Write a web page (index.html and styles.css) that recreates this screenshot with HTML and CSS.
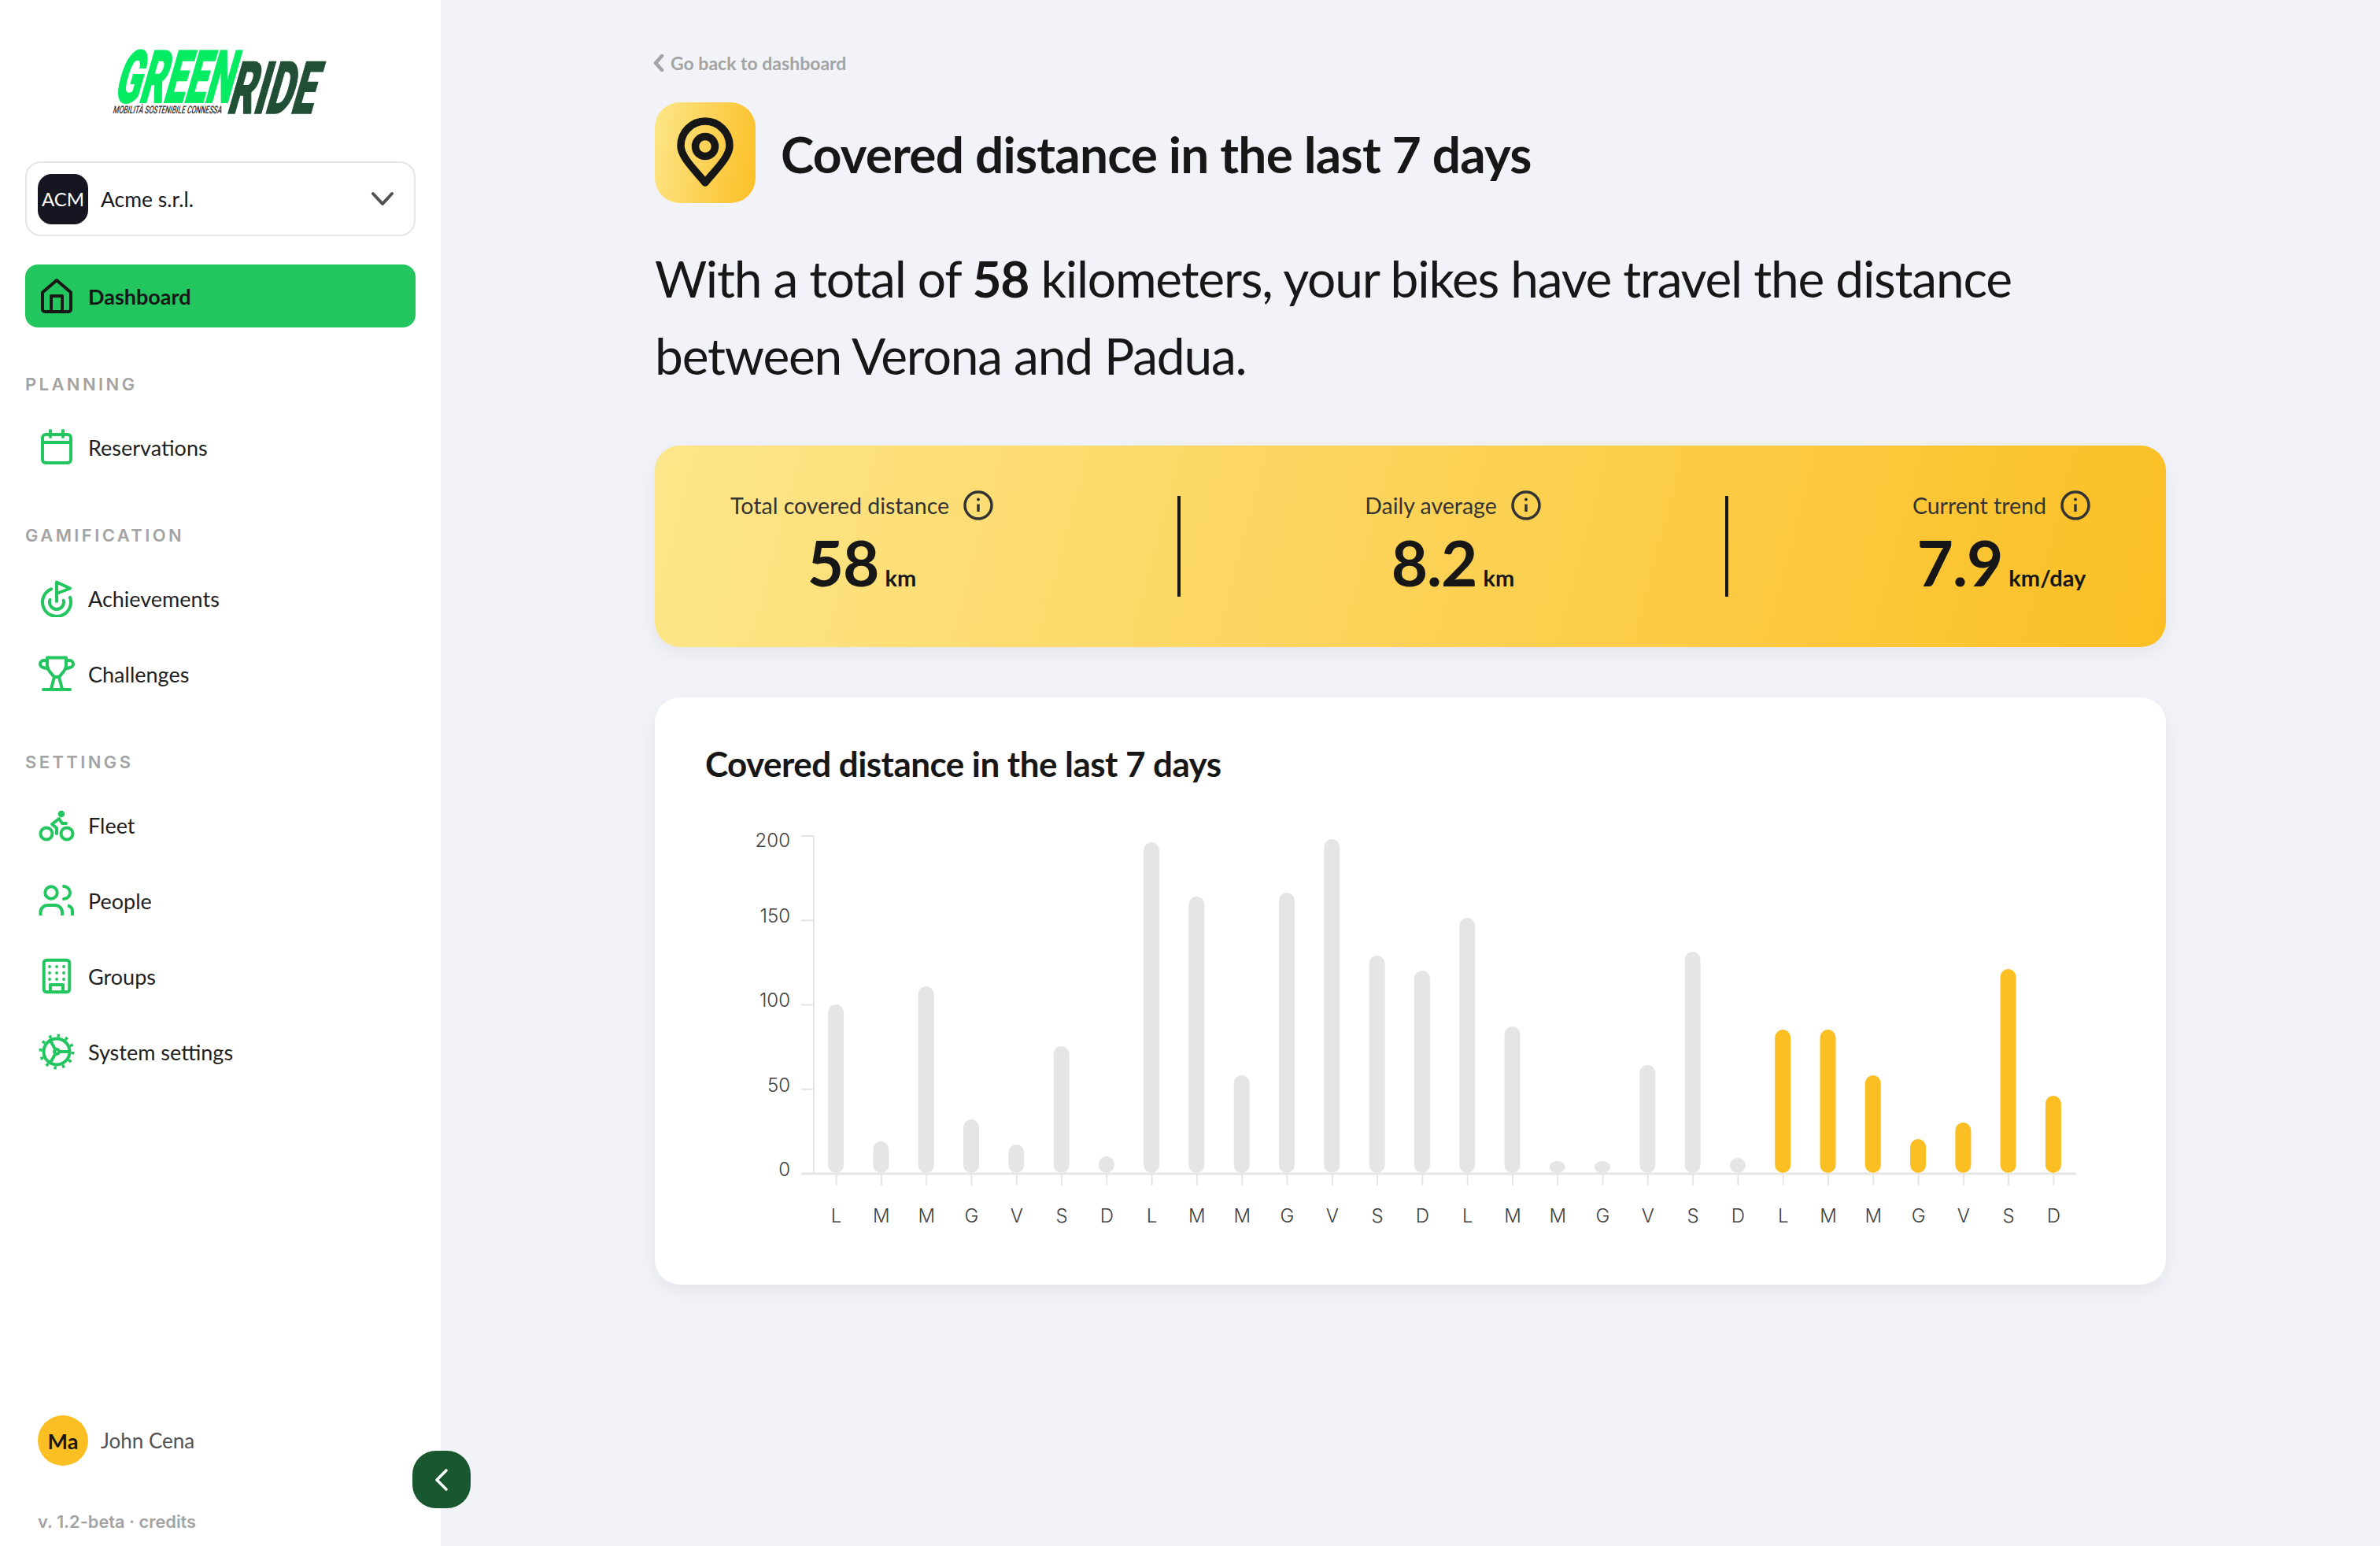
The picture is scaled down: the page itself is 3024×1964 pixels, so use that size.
FILE: index.html
```html
<!DOCTYPE html>
<html>
<head>
    <meta charset="utf-8">
    <title>GreenRide - Covered distance</title>
    <link rel="stylesheet" href="styles.css">
</head>
<body>
<div class="layout">
    <!--sidebar-->
    <aside class="sidebar">
        <svg class="logo" width="280" height="90" viewBox="0 0 280 90">
            <text class="logo-word logo-green" transform="translate(3,70) skewX(-16)" textLength="149" lengthAdjust="spacingAndGlyphs">GREEN</text>
            <text class="logo-word logo-dark" transform="translate(147,84) skewX(-16)" textLength="109" lengthAdjust="spacingAndGlyphs">RIDE</text>
            <text class="logo-tag" transform="translate(3,84) skewX(-14)" textLength="138" lengthAdjust="spacingAndGlyphs">MOBILITÀ SOSTENIBILE CONNESSA</text>
        </svg>

        <div class="org-select">
            <span class="org-avatar">ACM</span>
            <span class="org-name">Acme s.r.l.</span>
            <svg class="org-arrow" width="32" height="20" viewBox="0 0 32 20"><path d="M4 3 L16 16 L28 3"/></svg>
        </div>

        <nav class="nav">
            <a class="nav-item active">
                <svg class="nav-icon" viewBox="0 0 48 48"><path d="M6 19.5 L24 4 L42 19.5 V41 a3 3 0 0 1-3 3 H9 a3 3 0 0 1-3-3 Z"/><path d="M17 44 V24 H31 V44"/></svg>
                <span>Dashboard</span>
            </a>

            <h4 class="nav-title">PLANNING</h4>
            <a class="nav-item">
                <svg class="nav-icon" viewBox="0 0 48 48"><rect x="6" y="8" width="36" height="36" rx="4"/><path d="M6 18 H42 M16 3 V11 M32 3 V11"/></svg>
                <span>Reservations</span>
            </a>

            <h4 class="nav-title">GAMIFICATION</h4>
            <a class="nav-item">
                <svg class="nav-icon" viewBox="0 0 48 48"><path d="M17 12.4 A18 18 0 1 0 41 23"/><path d="M15.5 26 A9 9 0 1 0 32.7 26.7"/><path d="M24 28 V3.5 L41 11.5 L24 18"/></svg>
                <span>Achievements</span>
            </a>
            <a class="nav-item">
                <svg class="nav-icon" viewBox="0 0 48 48"><path d="M12 3.5 H36 V13 C36 20 30 24 27 28 L31 43 M12 3.5 V13 C12 20 18 24 21 28 L17 43 M7 44 H41 M21 28 H27"/><path d="M12 7 H8 a4.5 4.5 0 0 0-1 9 L12.5 17.500 M36 7 H40 a4.500 4.500 0 0 1 1 9 L35.500 17.500"/></svg>
                <span>Challenges</span>
            </a>

            <h4 class="nav-title">SETTINGS</h4>
            <a class="nav-item">
                <svg class="nav-icon" viewBox="0 0 48 48"><circle cx="11" cy="35" r="7.500"/><circle cx="37" cy="35" r="7.500"/><path d="M24 35 V28 L18 23 L27 16 L31 22 H36"/><circle class="fill" cx="30" cy="10" r="4.300"/></svg>
                <span>Fleet</span>
            </a>
            <a class="nav-item">
                <svg class="nav-icon" viewBox="0 0 48 48"><circle cx="17" cy="14" r="7.700"/><path d="M33 6 a8 8 0 0 1 0 16"/><path class="butt" d="M3.500 43 V39 A9 9 0 0 1 12.500 30 H22 A9 9 0 0 1 31 39 V43"/><path class="butt" d="M38 30.500 A7 7 0 0 1 44 38 V43"/></svg>
                <span>People</span>
            </a>
            <a class="nav-item">
                <svg class="nav-icon" viewBox="0 0 48 48"><rect x="7.700" y="3.700" width="32.600" height="40.600" rx="3.500"/><path d="M16 44 V35 H32 V44"/><g class="fill"><circle cx="15" cy="12" r="1.900"/><circle cx="24" cy="12" r="1.900"/><circle cx="33" cy="12" r="1.900"/><circle cx="15" cy="20" r="1.900"/><circle cx="24" cy="20" r="1.900"/><circle cx="33" cy="20" r="1.900"/><circle cx="15" cy="28" r="1.900"/><circle cx="24" cy="28" r="1.900"/><circle cx="33" cy="28" r="1.900"/></g></svg>
                <span>Groups</span>
            </a>
            <a class="nav-item">
                <svg class="nav-icon" viewBox="0 0 48 48"><circle cx="24" cy="24" r="16.500"/><circle cx="24" cy="24" r="3"/><path d="M27 24 H40 M22.500 21.400 L15.800 9.800 M22.500 26.600 L15.800 38.200"/><circle class="teeth" cx="24" cy="24" r="20.500"/></svg>
                <span>System settings</span>
            </a>
        </nav>

        <div class="user">
            <span class="user-avatar">Ma</span>
            <span class="user-name">John Cena</span>
        </div>
        <div class="version">v. 1.2-beta · credits</div>

        <button class="collapse">
            <svg width="20" height="30" viewBox="0 0 20 30"><path d="M16 3 L4 15 L16 27"/></svg>
        </button>
    </aside>

    <!--main content-->
    <main class="main">
        <div class="content">
            <a class="back">
                <svg width="14" height="22" viewBox="0 0 14 22"><path d="M11 2 L3 11 L11 20"/></svg>
                Go back to dashboard
            </a>

            <div class="heading">
                <div class="heading-icon">
                    <svg width="128" height="128" viewBox="0 0 128 128"><path d="M64 102 C52 87 33 70 33 55 A31 31 0 0 1 95 55 C95 70 76 87 64 102 Z"/><circle cx="64" cy="56" r="12.500"/></svg>
                </div>
                <h1>Covered distance in the last 7 days</h1>
            </div>

            <div class="summary">
                <p>With a total of <b>58</b> kilometers, your bikes have travel the distance</p>
                <p>between Verona and Padua.</p>
            </div>

            <section class="stats">
                <div class="stat">
                    <div class="stat-label">Total covered distance
                        <svg class="info" viewBox="0 0 38 38"><circle cx="19" cy="19" r="17"/><path d="M19 17.500 V27"/><circle class="dot" cx="19" cy="11.500" r="2"/></svg>
                    </div>
                    <div class="stat-value">58<small>km</small></div>
                </div>
                <div class="divider"></div>
                <div class="stat">
                    <div class="stat-label">Daily average
                        <svg class="info" viewBox="0 0 38 38"><circle cx="19" cy="19" r="17"/><path d="M19 17.500 V27"/><circle class="dot" cx="19" cy="11.500" r="2"/></svg>
                    </div>
                    <div class="stat-value">8.2<small>km</small></div>
                </div>
                <div class="divider"></div>
                <div class="stat">
                    <div class="stat-label">Current trend
                        <svg class="info" viewBox="0 0 38 38"><circle cx="19" cy="19" r="17"/><path d="M19 17.500 V27"/><circle class="dot" cx="19" cy="11.500" r="2"/></svg>
                    </div>
                    <div class="stat-value">7.9<small>km/day</small></div>
                </div>
            </section>

            <section class="chart-card">
                <h2>Covered distance in the last 7 days</h2>
                <svg class="chart" width="1792" height="528" viewBox="0 0 1792 528">
                    <!--assi-->
                    <path class="axis" d="M138 22 V451 M122 22 H138 M122 129.300 H138 M122 236.500 H138 M122 343.800 H138"/>
                    <path class="axis" d="M166.600 451 V466 M223.900 451 V466 M281.200 451 V466 M338.500 451 V466 M395.800 451 V466 M453.100 451 V466 M510.300 451 V466 M567.600 451 V466 M624.900 451 V466 M682.200 451 V466 M739.500 451 V466 M796.800 451 V466 M854.100 451 V466 M911.400 451 V466 M968.700 451 V466 M1026 451 V466 M1083.200 451 V466 M1140.500 451 V466 M1197.800 451 V466 M1255.100 451 V466 M1312.400 451 V466 M1369.700 451 V466 M1427 451 V466 M1484.300 451 V466 M1541.600 451 V466 M1598.900 451 V466 M1656.100 451 V466 M1713.400 451 V466"/>
                    <path class="axis base" d="M122 451 H1742"/>
                    <!--valori-->
                    <g class="y-labels">
                        <text x="108" y="36">200</text>
                        <text x="108" y="132">150</text>
                        <text x="108" y="239">100</text>
                        <text x="108" y="347">50</text>
                        <text x="108" y="454">0</text>
                    </g>
                    <!--barre-->
                    <g class="bars">
                        <rect x="156.100" y="236" width="20" height="214" rx="10"/>
                        <rect x="213.400" y="410" width="20" height="40" rx="10"/>
                        <rect x="270.700" y="213" width="20" height="237" rx="10"/>
                        <rect x="328" y="382" width="20" height="68" rx="10"/>
                        <rect x="385.300" y="414" width="20" height="36" rx="10"/>
                        <rect x="442.600" y="289" width="20" height="161" rx="10"/>
                        <rect x="499.800" y="429" width="20" height="21" rx="10"/>
                        <rect x="557.100" y="30" width="20" height="420" rx="10"/>
                        <rect x="614.400" y="99" width="20" height="351" rx="10"/>
                        <rect x="671.700" y="326" width="20" height="124" rx="10"/>
                        <rect x="729" y="94" width="20" height="356" rx="10"/>
                        <rect x="786.300" y="26" width="20" height="424" rx="10"/>
                        <rect x="843.600" y="174" width="20" height="276" rx="10"/>
                        <rect x="900.900" y="193" width="20" height="257" rx="10"/>
                        <rect x="958.200" y="126" width="20" height="324" rx="10"/>
                        <rect x="1015.500" y="264" width="20" height="186" rx="10"/>
                        <rect x="1072.700" y="435" width="20" height="15" rx="10"/>
                        <rect x="1130" y="435" width="20" height="15" rx="10"/>
                        <rect x="1187.300" y="313" width="20" height="137" rx="10"/>
                        <rect x="1244.600" y="169" width="20" height="281" rx="10"/>
                        <rect x="1301.900" y="431" width="20" height="19" rx="10"/>
                    </g>
                    <g class="bars current">
                        <rect x="1359.200" y="268" width="20" height="182" rx="10"/>
                        <rect x="1416.500" y="268" width="20" height="182" rx="10"/>
                        <rect x="1473.800" y="326" width="20" height="124" rx="10"/>
                        <rect x="1531.100" y="407" width="20" height="43" rx="10"/>
                        <rect x="1588.400" y="386" width="20" height="64" rx="10"/>
                        <rect x="1645.600" y="191" width="20" height="259" rx="10"/>
                        <rect x="1702.900" y="352" width="20" height="98" rx="10"/>
                    </g>
                    <!--giorni-->
                    <g class="x-labels">
                        <text x="166.600" y="513">L</text>
                        <text x="223.900" y="513">M</text>
                        <text x="281.200" y="513">M</text>
                        <text x="338.500" y="513">G</text>
                        <text x="395.800" y="513">V</text>
                        <text x="453.100" y="513">S</text>
                        <text x="510.300" y="513">D</text>
                        <text x="567.600" y="513">L</text>
                        <text x="624.900" y="513">M</text>
                        <text x="682.200" y="513">M</text>
                        <text x="739.500" y="513">G</text>
                        <text x="796.800" y="513">V</text>
                        <text x="854.100" y="513">S</text>
                        <text x="911.400" y="513">D</text>
                        <text x="968.700" y="513">L</text>
                        <text x="1026" y="513">M</text>
                        <text x="1083.200" y="513">M</text>
                        <text x="1140.500" y="513">G</text>
                        <text x="1197.800" y="513">V</text>
                        <text x="1255.100" y="513">S</text>
                        <text x="1312.400" y="513">D</text>
                        <text x="1369.700" y="513">L</text>
                        <text x="1427" y="513">M</text>
                        <text x="1484.300" y="513">M</text>
                        <text x="1541.600" y="513">G</text>
                        <text x="1598.900" y="513">V</text>
                        <text x="1656.100" y="513">S</text>
                        <text x="1713.400" y="513">D</text>
                    </g>
                </svg>
            </section>
        </div>
    </main>
</div>
</body>
</html>
```

FILE: styles.css
```css
* {
    box-sizing: border-box;
}
body {
    margin: 0;
    background: #f1f3f8;
    color: #171717;
    font-family: "Lato", "Noto Sans", sans-serif;
}
h1, h2, h4, p {
    margin: 0;
}
.layout {
    display: flex;
    min-height: 100vh;
}

/* sidebar */
.sidebar {
    position: relative;
    display: flex;
    flex-direction: column;
    flex: none;
    width: 560px;
    height: 1964px;
    padding: 60px 32px 0;
    background: #fff;
}
.logo {
    display: block;
    margin: 0 0 55px 108px;
    overflow: visible;
}
.logo-word {
    font-family: "Roboto", sans-serif;
    font-weight: 900;
    font-size: 92px;
}
.logo-green {
    fill: #05ec62;
    stroke: #05ec62;
    stroke-width: 2px;
}
.logo-dark {
    fill: #214f35;
    stroke: #214f35;
    stroke-width: 1.5px;
}
.logo-tag {
    font-family: "Roboto", sans-serif;
    font-weight: 500;
    font-size: 13.5px;
    fill: #2f2f2f;
}
.org-select {
    display: flex;
    align-items: center;
    height: 95px;
    padding: 0 24px 0 14px;
    border: 2px solid #e5e5e5;
    border-radius: 20px;
}
.org-avatar {
    display: flex;
    align-items: center;
    justify-content: center;
    width: 64px;
    height: 64px;
    border-radius: 18px;
    background: #151622;
    color: #fff;
    font-size: 24px;
}
.org-name {
    flex: 1;
    margin-left: 16px;
    font-size: 26.500px;
}
.org-arrow path {
    fill: none;
    stroke: #525252;
    stroke-width: 4;
    stroke-linecap: round;
    stroke-linejoin: round;
}
.nav {
    display: flex;
    flex-direction: column;
    margin-top: 36px;
}
.nav-item {
    display: flex;
    align-items: center;
    gap: 16px;
    height: 80px;
    margin-bottom: 16px;
    padding: 0 16px;
    border-radius: 16px;
    font-size: 27px;
    color: #1f1f1f;
}
.nav-item.active {
    background: #22c55e;
    color: #171717;
    font-weight: 700;
}
.nav-title {
    margin: 44px 0 28px;
    font-family: "Inter", sans-serif;
    font-size: 22px;
    line-height: 24px;
    font-weight: 600;
    letter-spacing: 3.4px;
    color: #a3a3a3;
}
.nav-icon {
    flex: none;
    width: 48px;
    height: 48px;
    fill: none;
    stroke: #22c55e;
    stroke-width: 4;
    stroke-linecap: round;
    stroke-linejoin: round;
}
.active .nav-icon {
    stroke: #171717;
}
.nav-icon .fill {
    fill: #22c55e;
    stroke: none;
}
.nav-icon .butt {
    stroke-linecap: butt;
}
.nav-icon .teeth {
    stroke-width: 4;
    stroke-linecap: butt;
    stroke-dasharray: 3.5 7.23;
}
.user {
    display: flex;
    align-items: center;
    gap: 16px;
    margin-top: auto;
    margin-left: 16px;
}
.user-avatar {
    display: flex;
    align-items: center;
    justify-content: center;
    width: 64px;
    height: 64px;
    border-radius: 50%;
    background: #fbbf24;
    font-size: 27px;
    font-weight: 700;
}
.user-name {
    font-size: 26px;
    color: #525252;
}
.version {
    margin: 58px 0 18px 16px;
    font-family: "Inter", sans-serif;
    font-size: 21.800px;
    line-height: 26px;
    font-weight: 600;
    color: #a3a3a3;
}
.collapse {
    position: absolute;
    right: -38px;
    top: 1843px;
    display: flex;
    align-items: center;
    justify-content: center;
    width: 74px;
    height: 73px;
    border: 0;
    border-radius: 30px;
    background: #18572f;
}
.collapse path {
    fill: none;
    stroke: #fff;
    stroke-width: 3.6;
    stroke-linecap: round;
    stroke-linejoin: round;
}

/* main */
.main {
    flex: 1;
    padding-top: 64px;
}
.content {
    width: 1920px;
    margin: 0 auto;
}
.back {
    display: flex;
    align-items: center;
    gap: 8px;
    height: 32px;
    margin-bottom: 34px;
    margin-left: -2px;
    font-size: 23px;
    font-weight: 700;
    color: #a3a3a3;
}
.back path {
    fill: none;
    stroke: #a3a3a3;
    stroke-width: 4.500;
    stroke-linecap: round;
    stroke-linejoin: round;
}
.heading {
    display: flex;
    align-items: center;
    gap: 32px;
}
.heading-icon {
    width: 128px;
    height: 128px;
    border-radius: 32px;
    background: linear-gradient(100deg, #fde68a, #fbbf24);
}
.heading-icon svg {
    display: block;
    fill: none;
    stroke: #171717;
    stroke-width: 9.500;
    stroke-linejoin: round;
}
h1 {
    padding-top: 2px;
    font-size: 64px;
    font-weight: 700;
    letter-spacing: -.8px;
}
.summary {
    margin-top: 47px;
    font-size: 64px;
    line-height: 98px;
    letter-spacing: -1.2px;
}
.summary b {
    font-weight: 700;
}
.stats {
    display: flex;
    align-items: center;
    justify-content: space-between;
    height: 256px;
    margin-top: 65px;
    padding: 0 96px;
    border-radius: 32px;
    background: linear-gradient(105deg, #fde68a, #fbbf24);
    box-shadow: 0 8px 24px rgba(0, 0, 0, .06);
}
.divider {
    width: 4px;
    height: 128px;
    background: #171717;
}
.stat {
    padding-top: 16px;
}
.stat-label {
    display: flex;
    align-items: center;
    gap: 18px;
    height: 38px;
    font-size: 28.500px;
    color: #333;
}
.info {
    width: 38px;
    height: 38px;
    fill: none;
    stroke: #333;
    stroke-width: 3.500;
}
.info .dot {
    fill: #333;
    stroke: none;
}
.stat-value {
    margin-top: 6px;
    text-align: center;
    font-size: 80px;
    line-height: 94px;
    font-weight: 700;
    letter-spacing: -1px;
}
.stat-value small {
    margin-left: 8px;
    font-size: 29px;
    font-weight: 700;
    letter-spacing: 0;
}
.chart-card {
    height: 746px;
    margin-top: 64px;
    padding: 56px 64px 0;
    border-radius: 32px;
    background: #fff;
    box-shadow: 0 8px 24px rgba(0, 0, 0, .06);
}
h2 {
    margin-bottom: 42px;
    font-size: 44px;
    line-height: 56px;
    font-weight: 700;
    letter-spacing: -.55px;
}
.chart {
    display: block;
}
.axis {
    fill: none;
    stroke: #e5e5e5;
    stroke-width: 2;
}
.axis.base {
    stroke-width: 3;
}
.bars {
    fill: #e5e5e5;
}
.bars.current {
    fill: #fbbf24;
}
.y-labels text,
.x-labels text {
    font-family: "Inter", sans-serif;
    font-size: 24px;
    font-weight: 300;
    fill: #404040;
}
.y-labels text {
    text-anchor: end;
}
.x-labels text {
    text-anchor: middle;
}
```
